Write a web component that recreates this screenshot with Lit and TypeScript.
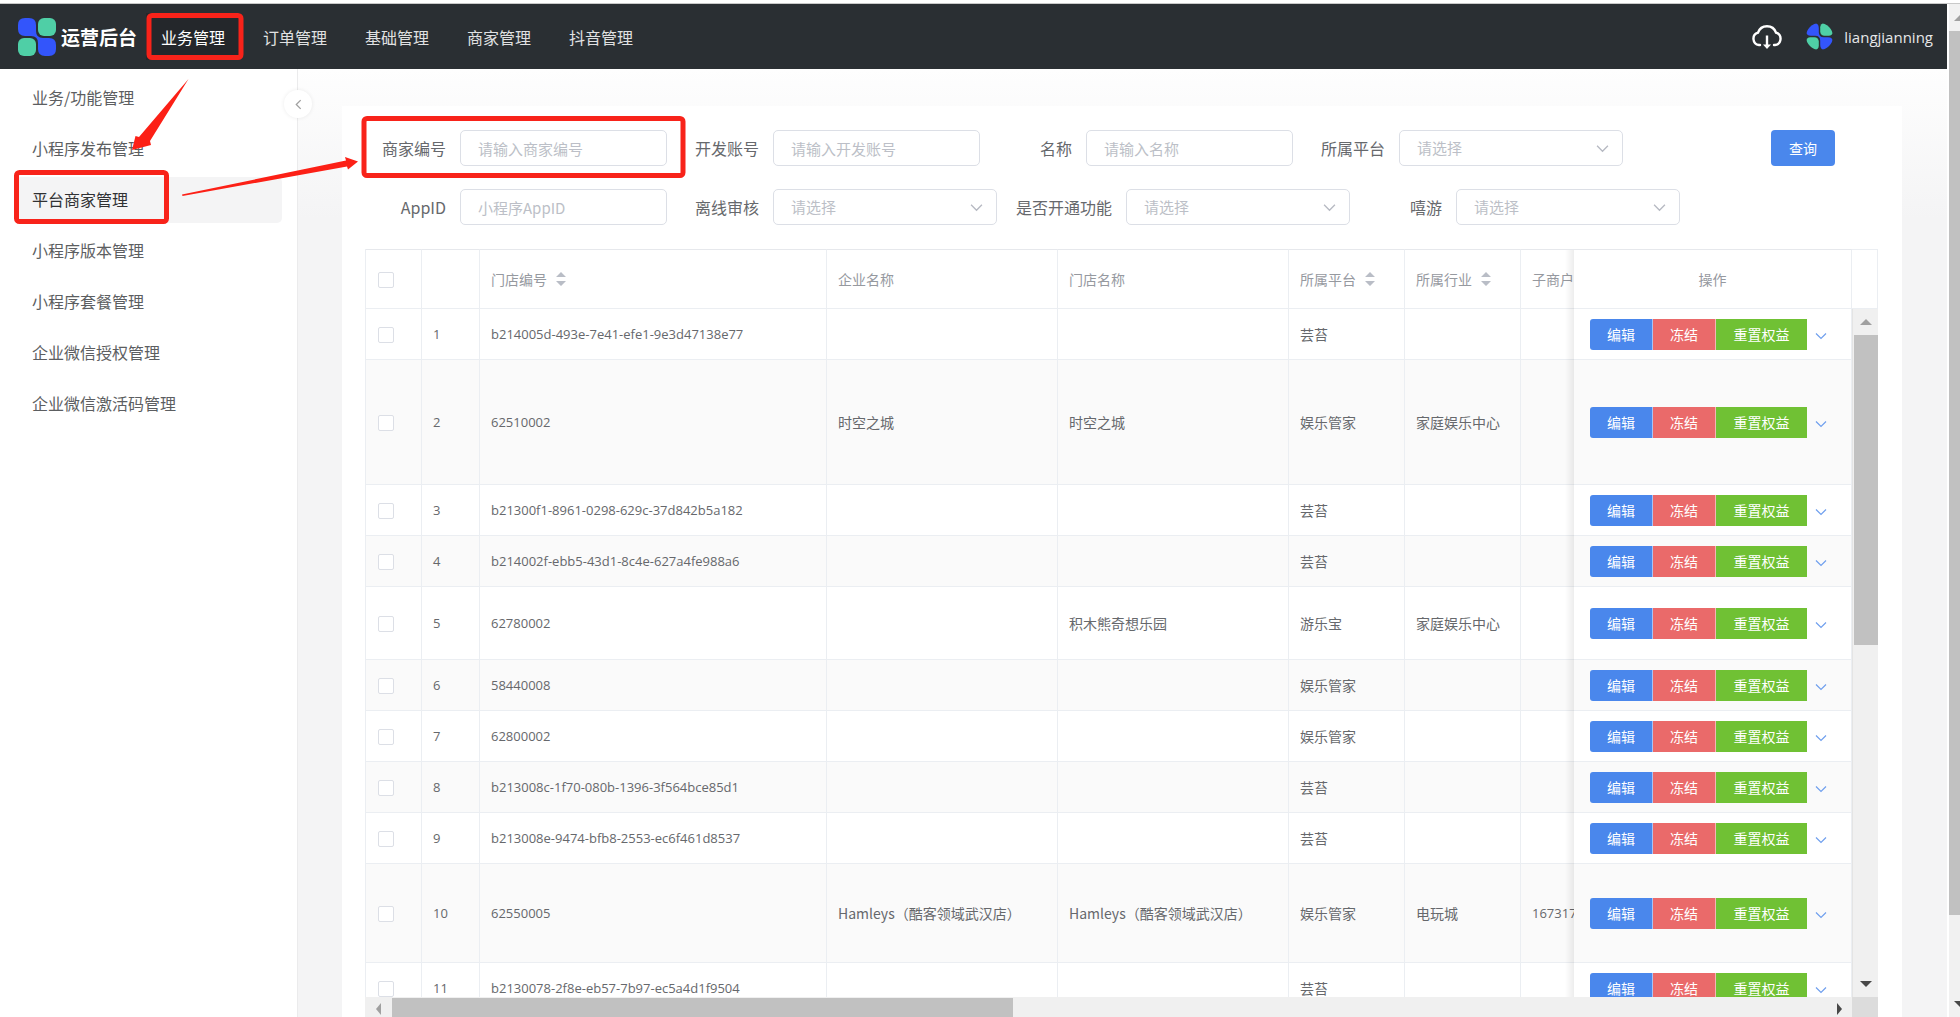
import { LitElement, html, css, svg } from "lit";
import { customElement, state } from "lit/decorators.js";

type Row = { id: string; company?: string; store?: string; platform: string; industry?: string; sub?: string; size?: string };
type Field = { key: string; label: string; hint: string; select?: boolean; wide?: boolean };

const NAV = ["业务管理", "订单管理", "基础管理", "商家管理", "抖音管理"];
const MENU = ["业务/功能管理", "小程序发布管理", "平台商家管理", "小程序版本管理", "小程序套餐管理", "企业微信授权管理", "企业微信激活码管理"];

const FIELDS: Field[][] = [
  [
    { key: "merchant", label: "商家编号", hint: "请输入商家编号" },
    { key: "account", label: "开发账号", hint: "请输入开发账号" },
    { key: "name", label: "名称", hint: "请输入名称" },
    { key: "platform", label: "所属平台", hint: "请选择", select: true },
  ],
  [
    { key: "appid", label: "AppID", hint: "小程序AppID" },
    { key: "offline", label: "离线审核", hint: "请选择", select: true },
    { key: "enabled", label: "是否开通功能", hint: "请选择", select: true, wide: true },
    { key: "xiyou", label: "嘻游", hint: "请选择", select: true },
  ],
];

const ROWS: Row[] = [
  { id: "b214005d-493e-7e41-efe1-9e3d47138e77", platform: "芸苔" },
  { id: "62510002", company: "时空之城", store: "时空之城", platform: "娱乐管家", industry: "家庭娱乐中心", size: "xl" },
  { id: "b21300f1-8961-0298-629c-37d842b5a182", platform: "芸苔" },
  { id: "b214002f-ebb5-43d1-8c4e-627a4fe988a6", platform: "芸苔" },
  { id: "62780002", store: "积木熊奇想乐园", platform: "游乐宝", industry: "家庭娱乐中心", size: "md" },
  { id: "58440008", platform: "娱乐管家" },
  { id: "62800002", platform: "娱乐管家" },
  { id: "b213008c-1f70-080b-1396-3f564bce85d1", platform: "芸苔" },
  { id: "b213008e-9474-bfb8-2553-ec6f461d8537", platform: "芸苔" },
  { id: "62550005", company: "Hamleys（酷客领域武汉店）", store: "Hamleys（酷客领域武汉店）", platform: "娱乐管家", industry: "电玩城", sub: "167317", size: "lg" },
  { id: "b2130078-2f8e-eb57-7b97-ec5a4d1f9504", platform: "芸苔" },
];

const chevron = (cls: string) => html`<svg class=${cls} viewBox="0 0 12 8" aria-hidden="true"><path d="M1 1.5 6 6.5 11 1.5" fill="none" stroke="currentColor" stroke-width="1.2"/></svg>`;
const sorter = html`<svg class="sort" viewBox="0 0 12 16" aria-hidden="true"><path d="M6 1 11 6H1zM6 15 1 10h10z" fill="#b9bdc6"/></svg>`;

const petals = svg`
  <path d="M7 0h4q7 0 7 7v6q0 7 7 7h6q7 0 7 7v4q0 7-7 7h-4q-7 0-7-7v-6q0-7-7-7H7q-7 0-7-7V7q0-7 7-7z" fill="#3355fb"/>
  <rect x="20" y="0" width="18" height="18" rx="6" fill="#4fcfa6"/>
  <rect x="0" y="20" width="18" height="18" rx="6" fill="#4fcfa6"/>`;

@customElement("app-root")
export class AppRoot extends LitElement {
  @state() private nav = 0;
  @state() private menu = 2;

  static styles = css`
    :host { display: block; position: relative; height: 100vh; overflow: hidden; background: #fff;
      font: 16px/24px "Noto Sans CJK SC", sans-serif; color: #66686c; }
    * { box-sizing: border-box; }
    button, input, select { font: inherit; color: inherit; margin: 0; }
    button { cursor: pointer; }
    .page { display: flex; height: 100%; flex-direction: column; }
    .strip { height: 4px; flex: none; border-bottom: 1px solid #c9c9c9; }
    .frame { display: flex; flex: 1; min-height: 0; }
    .app { flex: 1; min-width: 0; display: flex; flex-direction: column; }

    .top { display: flex; align-items: center; height: 65px; flex: none; padding: 0 14px 0 18px; background: #2a2f33; color: #e0e1e2; }
    .logo { width: 38px; height: 38px; }
    .brand { margin: 0 5px 0 5px; font-size: 19px; font-weight: 700; color: #fff; width: 80px; white-space: nowrap; }
    .nav { display: flex; height: 47px; gap: 8px; }
    .nav a { display: flex; align-items: center; padding: 0 15px; width: 94px; color: inherit; text-decoration: none; white-space: nowrap; }
    .nav a.on { background: #24272b; color: #fff; }
    .tools { margin-left: auto; display: flex; align-items: center; }
    .icon-btn { border: 0; padding: 0; background: none; display: flex; }
    .cloud { width: 32px; height: 26px; margin-right: 23px; }
    .avatar { width: 27px; height: 27px; margin-right: 11px; border-radius: 50%; }
    .user { font-family: "Open Sans", "Noto Sans CJK SC", sans-serif; font-size: 15px; color: #e6e7e8; }

    .body { display: flex; flex: 1; min-height: 0; }
    .side { position: relative; width: 298px; flex: none; padding: 6px 15px 0 16px; border-right: 1px solid #ebebec; background: #fff; }
    .side nav { display: flex; flex-direction: column; gap: 5px; }
    .side a { display: flex; align-items: center; height: 46px; padding: 0 16px 2px; border-radius: 5px; color: #5c5e61; text-decoration: none; }
    .side a.on { background: #f4f4f5; color: #303133; }
    .fold { position: absolute; right: -15px; top: 21px; width: 28px; height: 28px; padding: 0; border: 0; border-radius: 50%;
      background: #fff; box-shadow: 0 0 4px rgba(0,0,0,.08); display: grid; place-items: center; z-index: 1; }
    .fold svg { width: 7px; height: 11px; color: #a0a0a0; }

    .main { flex: 1; min-width: 0; padding: 37px 45px 0 44px; background: linear-gradient(#fefefe, #f4f4f5 150px); display: flex; }
    .panel { flex: 1; min-width: 0; background: #fff; padding: 24px 24px 0 23px; display: flex; flex-direction: column; gap: 24px; }
    .search { display: flex; align-items: flex-start; justify-content: space-between; }
    .fields { display: flex; flex-direction: column; gap: 23px; }
    .line { display: flex; gap: 11px; }
    .field { display: flex; align-items: center; }
    .field label { width: 95px; padding-right: 14px; text-align: right; white-space: nowrap; }
    .field.wide label { width: 118px; }
    .box { position: relative; display: flex; }
    .box input, .box select { width: 207px; height: 36px; padding: 0 17px; border: 1px solid #dcdfe6; border-radius: 5px; background: #fff; font-size: 15px; outline: none; }
    .box select { width: 224px; appearance: none; color: #bcbfc7; }
    .box input::placeholder { color: #bcbfc7; opacity: 1; }
    .drop { position: absolute; right: 14px; top: 14px; width: 13px; height: 9px; color: #b6b9c2; pointer-events: none; }
    .query { width: 64px; height: 36px; margin-right: 43px; padding: 0; border: 0; border-radius: 4px; background: #4a87ec; color: #fff; font-size: 14px; }

    .grid { flex: 1; min-height: 0; display: grid; grid-template: 1fr 20px / 1fr 26px; }
    .view { overflow: hidden; position: relative; }
    table { width: 3400px; table-layout: fixed; border-collapse: separate; border-spacing: 0; border-left: 1px solid #ebeef2; font-size: 14px; line-height: 20px; }
    .c-check { width: 56px; } .c-no { width: 58px; } .c-id { width: 347px; } .c-name { width: 231px; } .c-tag { width: 116px; } .c-op { width: 278px; }
    th, td { padding: 0 11px; text-align: left; border-right: 1px solid #ebeef2; border-bottom: 1px solid #ebeef2; font-weight: 400; background: #fff; white-space: nowrap; }
    th { height: 60px; border-top: 1px solid #e6e8ec; color: #96999f; }
    td { height: 51px; }
    .xl td { height: 125px; } .md td { height: 73px; } .lg td { height: 99px; }
    tr:nth-child(even) td { background: #fafafa; }
    .num { font-family: "Open Sans", sans-serif; font-size: 13px; }
    .sort { width: 12px; height: 16px; margin-left: 8px; vertical-align: -2px; }
    .tick { appearance: none; display: block; width: 16px; height: 16px; margin: 2px 0 0 1px; border: 1px solid #dcdfe6; border-radius: 2px; background: #fff; }
    .fix { position: sticky; right: 0; padding: 0 16px; }
    .fix::before { content: ""; position: absolute; left: -9px; top: 0; bottom: -1px; width: 9px; background: linear-gradient(90deg, rgba(0,0,0,0), rgba(0,0,0,.07)); }
    th.fix { text-align: center; }
    .ops { display: flex; align-items: center; }
    .ops button { height: 31px; width: 63px; padding: 0; border: 0; border-right: 1px solid rgba(255,255,255,.5); color: #fff; font-size: 14px; }
    .ops .edit { background: #4a87ec; border-radius: 3px 0 0 3px; }
    .ops .freeze { background: #ea6a6a; }
    .ops .reset { background: #70c134; width: 91px; border-right: 0; }
    .ops .more { width: 12px; height: 12px; margin: 4px 0 0 8px; border: 0; background: none; color: #6f9fee; display: grid; place-items: center; }
    .more svg { width: 12px; height: 8px; }

    .vcol { display: flex; flex-direction: column; align-items: stretch; }
    .vhead { height: 60px; border: 1px solid #ebeef2; border-left: 0; }
    .vbar { flex: 1; display: flex; flex-direction: column; background: #f0f0f0; border-left: 1px solid #e4e4e4; }
    .cap { display: grid; place-items: center; flex: none; height: 26px; }
    .cap svg { width: 12px; height: 12px; }
    .vthumb { height: 45%; margin: 0 0 0 1px; background: #c1c1c1; }
    .vbar .cap:last-child { margin-top: auto; }
    .hbar { display: flex; background: #f0f0f0; padding-top: 1px; }
    .hbar .cap { width: 27px; height: 22px; }
    .hbar .cap:last-child { margin-left: auto; }
    .hthumb { width: 621px; background: #c1c1c1; }
    .corner { background: #dcdcdc; }

    .rail { width: 13px; flex: none; display: flex; flex-direction: column; overflow: hidden; background: #f1f1f1; border-left: 2px solid #fff; }
    .rail .cap { width: 22px; height: 27px; }
    .rail .cap svg { width: 14px; height: 12px; }
    .rail .thumb { flex: 1; margin-bottom: 75px; background: #c1c1c1; }

    .marks { position: absolute; left: 0; top: 0; width: 700px; height: 240px; pointer-events: none; z-index: 5; }
  `;

  private pick(e: Event, which: "nav" | "menu", i: number) {
    e.preventDefault();
    this[which] = i;
  }

  private field(f: Field) {
    return html`<div class="field ${f.wide ? "wide" : ""}">
      <label for=${f.key}>${f.label}</label>
      <div class="box">
        ${f.select
          ? html`<select id=${f.key}><option>${f.hint}</option></select>${chevron("drop")}`
          : html`<input id=${f.key} type="text" placeholder=${f.hint} />`}
      </div>
    </div>`;
  }

  private row(r: Row, i: number) {
    return html`<tr class=${r.size ?? ""}>
      <td><input class="tick" type="checkbox" aria-label=${`${i + 1}`} /></td>
      <td class="num">${i + 1}</td>
      <td class="num">${r.id}</td>
      <td>${r.company}</td>
      <td>${r.store}</td>
      <td>${r.platform}</td>
      <td>${r.industry}</td>
      <td class="num">${r.sub}</td>
      <td class="fix"><div class="ops">
        <button class="edit">编辑</button><button class="freeze">冻结</button><button class="reset">重置权益</button>
        <button class="more" aria-label="更多">${chevron("")}</button>
      </div></td>
    </tr>`;
  }

  render() {
    const tri = (d: string, c: string) => html`<svg viewBox="0 0 12 12" aria-hidden="true"><path d=${d} fill=${c} /></svg>`;
    return html`
      <div class="page">
        <div class="strip"></div>
        <div class="frame">
          <div class="app">
            <header class="top">
              <svg class="logo" viewBox="0 0 38 38" aria-hidden="true">${petals}</svg>
              <span class="brand">运营后台</span>
              <nav class="nav">${NAV.map((n, i) => html`<a href="#" class=${i === this.nav ? "on" : ""} @click=${(e: Event) => this.pick(e, "nav", i)}>${n}</a>`)}</nav>
              <div class="tools">
                <button class="icon-btn" aria-label="下载">
                  <svg class="cloud" viewBox="0 0 32 26" fill="none" stroke="#fff" stroke-width="2.4" stroke-linecap="round">
                    <path d="M9 21H8A6.300 6.300 0 0 1 7 8.700 9.500 9.500 0 0 1 25 8.700 6.300 6.300 0 0 1 24 21H23" />
                    <path d="M16 11.500V22" stroke-linecap="butt" />
                    <path d="M12 20.500h8L16 25z" fill="#fff" stroke="none" />
                  </svg>
                </button>
                <svg class="avatar" viewBox="0 0 38 38" aria-hidden="true">${petals}</svg>
                <span class="user">liangjianning</span>
              </div>
            </header>
            <div class="body">
              <aside class="side">
                <nav>${MENU.map((n, i) => html`<a href="#" class=${i === this.menu ? "on" : ""} @click=${(e: Event) => this.pick(e, "menu", i)}>${n}</a>`)}</nav>
                <button class="fold" aria-label="收起"><svg viewBox="0 0 8 12"><path d="M6.500 1 1.500 6l5 5" fill="none" stroke="currentColor" stroke-width="1.500" /></svg></button>
              </aside>
              <main class="main">
                <section class="panel">
                  <div class="search">
                    <div class="fields">${FIELDS.map((l) => html`<div class="line">${l.map((f) => this.field(f))}</div>`)}</div>
                    <button class="query">查询</button>
                  </div>
                  <div class="grid">
                    <div class="view">
                      <table>
                        <colgroup>
                          <col class="c-check" /><col class="c-no" /><col class="c-id" /><col class="c-name" /><col class="c-name" />
                          <col class="c-tag" /><col class="c-tag" /><col /><col class="c-op" />
                        </colgroup>
                        <thead><tr>
                          <th><input class="tick" type="checkbox" aria-label="全选" /></th><th></th>
                          <th>门店编号${sorter}</th><th>企业名称</th><th>门店名称</th>
                          <th>所属平台${sorter}</th><th>所属行业${sorter}</th><th>子商户</th><th class="fix">操作</th>
                        </tr></thead>
                        <tbody>${ROWS.map((r, i) => this.row(r, i))}</tbody>
                      </table>
                    </div>
                    <div class="vcol" aria-hidden="true">
                      <div class="vhead"></div>
                      <div class="vbar">
                        <div class="cap">${tri("M6 3 12 9H0z", "#a0a0a0")}</div>
                        <div class="vthumb"></div>
                        <div class="cap">${tri("M6 9 0 3h12z", "#484848")}</div>
                      </div>
                    </div>
                    <div class="hbar" aria-hidden="true">
                      <div class="cap">${tri("M3 6 8 0v12z", "#a0a0a0")}</div>
                      <div class="hthumb"></div>
                      <div class="cap">${tri("M9 6 4 0v12z", "#484848")}</div>
                    </div>
                    <div class="corner"></div>
                  </div>
                </section>
              </main>
            </div>
          </div>
          <div class="rail" aria-hidden="true">
            <div class="cap">${tri("M6 3 12 9H0z", "#a0a0a0")}</div>
            <div class="thumb"></div>
            <div class="cap">${tri("M6 9 0 3h12z", "#484848")}</div>
          </div>
        </div>
      </div>
      <svg class="marks" viewBox="0 0 700 240" fill="none" stroke="#f8231a" stroke-width="5" aria-hidden="true">
        <rect x="149" y="15.500" width="92" height="42" rx="3" />
        <rect x="16.500" y="172.500" width="150" height="49" rx="3" />
        <rect x="364" y="118.500" width="319" height="57" rx="3" />
        <g fill="#fc2016" stroke="none">
          <path d="M188.500 79 150 141 151 145 132 150 135.500 136 139 137z" />
          <path d="M182 194.500 346 160.500 345 157 358 161.500 348 169.500 347 166.500 182.500 196z" />
        </g>
      </svg>`;
  }
}
